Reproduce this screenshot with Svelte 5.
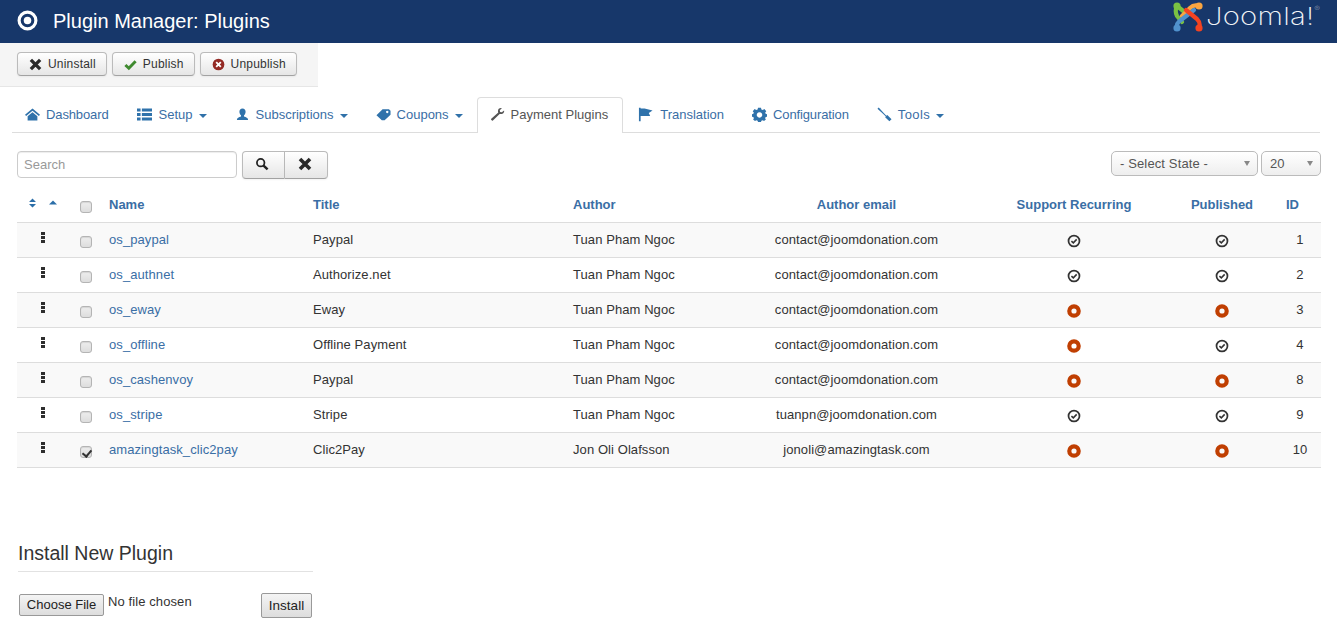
<script>
  const rows = [
    { name: 'os_paypal', title: 'Paypal', author: 'Tuan Pham Ngoc', email: 'contact@joomdonation.com', recurring: true, published: true, id: 1 },
    { name: 'os_authnet', title: 'Authorize.net', author: 'Tuan Pham Ngoc', email: 'contact@joomdonation.com', recurring: true, published: true, id: 2 },
    { name: 'os_eway', title: 'Eway', author: 'Tuan Pham Ngoc', email: 'contact@joomdonation.com', recurring: false, published: false, id: 3 },
    { name: 'os_offline', title: 'Offline Payment', author: 'Tuan Pham Ngoc', email: 'contact@joomdonation.com', recurring: false, published: true, id: 4 },
    { name: 'os_cashenvoy', title: 'Paypal', author: 'Tuan Pham Ngoc', email: 'contact@joomdonation.com', recurring: false, published: false, id: 8 },
    { name: 'os_stripe', title: 'Stripe', author: 'Tuan Pham Ngoc', email: 'tuanpn@joomdonation.com', recurring: true, published: true, id: 9 },
    { name: 'amazingtask_clic2pay', title: 'Clic2Pay', author: 'Jon Oli Olafsson', email: 'jonoli@amazingtask.com', recurring: false, published: false, id: 10, checked: true }
  ];

  const tabs = [
    { label: 'Dashboard', icon: 'home', fit: 'tight' },
    { label: 'Setup', icon: 'list', caret: true },
    { label: 'Subscriptions', icon: 'user', caret: true },
    { label: 'Coupons', icon: 'tag', caret: true },
    { label: 'Payment Plugins', icon: 'wrench', active: true },
    { label: 'Translation', icon: 'flag' },
    { label: 'Configuration', icon: 'cog', fit: 'tight' },
    { label: 'Tools', icon: 'tool', caret: true, fit: 'wide' }
  ];
</script>

{#snippet tabIcon(kind)}
  <svg class="tab-icon {kind}" viewBox="0 0 16 16" aria-hidden="true">
    {#if kind === 'home'}
      <path d="M8 1.500 L16 8.300 L14.800 9.600 L8 4 L1.200 9.600 L0 8.300 Z M2.800 9.800 L8 5.500 L13.200 9.800 V14.500 H2.800 Z" />
    {:else if kind === 'list'}
      <path d="M0 1.500h3.800v3.400H0zM5.200 1.500H16v3.400H5.200zM0 6.300h3.800v3.400H0zM5.200 6.300H16v3.400H5.200zM0 11.100h3.800v3.400H0zM5.200 11.100H16v3.400H5.200z" />
    {:else if kind === 'user'}
      <path d="M8 1.500c2.100 0 3.300 1.500 3.300 3.500 0 1.600-.7 3.100-1.700 3.900v1.100c2.300.7 4.300 1.300 4.400 3.800H2c.1-2.500 2.100-3.100 4.400-3.800V8.900C5.400 8.100 4.700 6.600 4.700 5c0-2 1.200-3.500 3.300-3.500z" />
    {:else if kind === 'tag'}
      <path fill-rule="evenodd" d="M0.500 8.800 L7 2.500 H13.800 L15.500 4 V8.200 L9.200 14 H6.200 Z M12 4 a1.300 1.300 0 1 0 .01 0 Z" />
    {:else if kind === 'wrench'}
      <path d="M15 3.600 L12.600 5.700 L10.800 5.300 L10.400 3.500 L12.600 1.300 C10.500 .7 8.400 2.200 8.500 4.500 C8.500 5 8.600 5.400 8.800 5.800 L1.300 12.600 C.5 13.400 2.200 15.200 3.100 14.300 L10.300 7.400 C12.800 8.100 15.700 6.200 15 3.600 Z" />
    {:else if kind === 'flag'}
      <path d="M1 .8h1.800v14.400H1zM2.800 1.500 H7 L15.500 3.800 L11.500 6.500 L13 9.500 H2.800 Z" />
    {:else if kind === 'cog'}
      <path fill-rule="evenodd" d="M6.400 .8 H9.600 L10 2.700 L11.500 3.300 L13.200 2.200 L15.200 4.400 L14 6 L14.600 7.300 L16 7.700 V10.300 L14.600 10.700 L14 12 L14.800 13.200 L12.800 15 L11.500 14 L10 14.700 L9.600 16 H6.400 L6 14.700 L4.500 14 L3.200 15 L1.200 13.200 L2 12 L1.400 10.700 L0 10.300 V7.700 L1.400 7.300 L2 6 L.8 4.400 L2.800 2.200 L4.500 3.300 L6 2.700 Z M8 5.600 a2.900 2.900 0 1 0 .01 0 Z" />
    {:else if kind === 'tool'}
      <path d="M.5 1.800 L1.800 .5 L7.400 6.600 L10 9.200 L11 8.500 L15.500 13 L13.200 15.300 L8.700 11 L9.400 10 L6.700 7.400 Z" />
    {/if}
  </svg>
{/snippet}

{#snippet stateIcon(on)}
  {#if on}
    <svg class="state" viewBox="0 0 12 12" aria-hidden="true">
      <circle cx="6" cy="6" r="4.700" fill="none" stroke="#333" stroke-width="1.500" />
      <path d="M3.800 6.100 L5.400 7.600 L8.300 4.600" fill="none" stroke="#333" stroke-width="1.300" />
    </svg>
  {:else}
    <svg class="state" viewBox="0 0 14 14" aria-hidden="true">
      <circle cx="7" cy="7" r="4.700" fill="none" stroke="#c03f02" stroke-width="4.200" />
    </svg>
  {/if}
{/snippet}

{#snippet crossIcon(cls)}
  <svg class={cls} viewBox="0 0 14 14" aria-hidden="true">
    <path d="M2 2 L12 12 M12 2 L2 12" stroke="#2a2a2a" stroke-width="3.600" />
  </svg>
{/snippet}

<header class="topbar">
  <div class="title">
    <svg class="title-icon" viewBox="0 0 20 20" aria-hidden="true">
      <circle cx="10" cy="10" r="8" fill="none" stroke="#fff" stroke-width="3" />
      <circle cx="10" cy="10" r="3.600" fill="#fff" />
    </svg>
    <h1>Plugin Manager: Plugins</h1>
  </div>
  <div class="logo">
    <svg viewBox="0 0 30 30" width="30" height="30" aria-hidden="true">
      <g fill="none" stroke-width="4.200" stroke-linecap="round" stroke-linejoin="round">
        <path d="M9 20 L4 14 Q1.500 9 4 4 L14 12" stroke="#7ac143" />
        <path d="M26 4 Q21 2 17 6 L9 14" stroke="#f9a541" />
        <path d="M4 26 Q3 21 8 18 L21 8" stroke="#5091cd" />
        <path d="M26 26 Q28 21 24 17 L13 8" stroke="#f44321" />
      </g>
      <circle cx="4" cy="4" r="3.600" fill="#7ac143" />
      <circle cx="26" cy="4" r="3.600" fill="#f9a541" />
      <circle cx="4" cy="26" r="3.600" fill="#5091cd" />
      <circle cx="26" cy="26" r="3.600" fill="#f44321" />
    </svg>
    <div class="wordmark"><span>Joomla!<sup>®</sup></span></div>
  </div>
</header>

<div class="toolbar">
  <button class="btn">{@render crossIcon('tb-icon')}Uninstall</button>
  <button class="btn">
    <svg class="tb-icon" viewBox="0 0 14 14" aria-hidden="true">
      <path d="M1.500 7.500 L5.200 11 L12.500 3.500" fill="none" stroke="#3f8a2f" stroke-width="3.200" />
    </svg>
    Publish
  </button>
  <button class="btn">
    <svg class="tb-icon" viewBox="0 0 14 14" aria-hidden="true">
      <circle cx="7" cy="7" r="6.300" fill="#942a25" />
      <path d="M4.500 4.500 L9.500 9.500 M9.500 4.500 L4.500 9.500" stroke="#fff" stroke-width="2" />
    </svg>
    Unpublish
  </button>
</div>

<nav class="tabs">
  {#each tabs as tab}
    <a class="tab {tab.fit ?? ''}" class:active={tab.active} href="#{tab.icon}">
      {@render tabIcon(tab.icon)}
      <span>{tab.label}</span>
      {#if tab.caret}<span class="caret"></span>{/if}
    </a>
  {/each}
</nav>

<main class="content">
  <div class="filters">
    <input class="search" type="text" placeholder="Search" />
    <div class="btn-group">
      <button class="btn icon-btn">
        <svg class="btn-glyph search-glyph" viewBox="0 0 16 16" aria-hidden="true">
          <circle cx="6.500" cy="6.500" r="4.300" fill="none" stroke="#222" stroke-width="2" />
          <path d="M9.800 9.800 L14.400 14.200" stroke="#222" stroke-width="2.800" />
        </svg>
      </button>
      <button class="btn icon-btn">{@render crossIcon('btn-glyph')}</button>
    </div>
    <div class="selects">
      <div class="select state-select">- Select State -<span class="arrow"></span></div>
      <div class="select limit-select">20<span class="arrow"></span></div>
    </div>
  </div>

  <table>
    <colgroup>
      <col style="width:52px" />
      <col style="width:40px" />
      <col style="width:204px" />
      <col style="width:260px" />
      <col style="width:175px" />
      <col style="width:217px" />
      <col style="width:218px" />
      <col style="width:78px" />
      <col style="width:60px" />
    </colgroup>
    <thead>
      <tr>
        <th class="sort">
          <svg viewBox="0 0 30 10" width="30" height="10" aria-hidden="true">
            <path d="M1 4 L4.500 .5 L8 4 Z M1 6 L4.500 9.500 L8 6 Z M21 6.500 L25 2.500 L29 6.500 Z" fill="#2b6ea8" />
          </svg>
        </th>
        <th class="check"><input type="checkbox" /></th>
        <th>Name</th>
        <th>Title</th>
        <th>Author</th>
        <th class="center">Author email</th>
        <th class="center">Support Recurring</th>
        <th class="center">Published</th>
        <th class="id-head">ID</th>
      </tr>
    </thead>
    <tbody>
      {#each rows as row}
        <tr>
          <td class="drag"><span class="dots"><i></i><i></i><i></i></span></td>
          <td class="check"><input type="checkbox" checked={row.checked} /></td>
          <td><a href="#{row.name}">{row.name}</a></td>
          <td>{row.title}</td>
          <td>{row.author}</td>
          <td class="center">{row.email}</td>
          <td class="center icon-cell">{@render stateIcon(row.recurring)}</td>
          <td class="center icon-cell">{@render stateIcon(row.published)}</td>
          <td class="id">{row.id}</td>
        </tr>
      {/each}
    </tbody>
  </table>

  <section class="install">
    <h3>Install New Plugin</h3>
    <div class="install-row">
      <button class="native">Choose File</button>
      <span class="no-file">No file chosen</span>
      <button class="native install-btn">Install</button>
    </div>
  </section>
</main>

<style>
  :global(body) {
    font-family: "Liberation Sans", Arial, sans-serif;
    font-size: 13px;
    color: #333;
    background: #fff;
    overflow: hidden;
  }

  .topbar {
    height: 43px;
    background: #17376a;
    display: flex;
    justify-content: space-between;
    color: #fff;
  }
  .title {
    display: flex;
    align-items: center;
    padding-left: 17px;
    gap: 15px;
  }
  .title-icon {
    width: 21px;
    height: 21px;
    margin-bottom: 2px;
  }
  h1 {
    margin: 0;
    font-size: 20px;
    font-weight: 400;
  }
  .logo {
    display: flex;
    align-items: flex-start;
    gap: 3px;
    padding: 2px 21px 0 0;
  }
  .wordmark {
    width: 110px;
    font-family: Inter, Lato, sans-serif;
    font-weight: 200;
    font-size: 24px;
    line-height: 30px;
    letter-spacing: .2px;
    color: #f2f5f8;
  }
  .wordmark span {
    display: inline-block;
    white-space: nowrap;
    transform: scaleX(1.22);
    transform-origin: left center;
  }
  .wordmark sup {
    font-size: 7px;
    vertical-align: top;
    line-height: 14px;
    color: #aab;
    letter-spacing: 0;
  }

  .toolbar {
    width: 318px;
    box-sizing: border-box;
    height: 44px;
    background: #f5f5f5;
    border-bottom: 1px solid #e6e6e6;
    padding: 9px 0 0 17px;
    display: flex;
    gap: 5px;
    align-items: flex-start;
  }
  .btn {
    font: 12px "Liberation Sans", Arial, sans-serif;
    letter-spacing: .2px;
    color: #333;
    height: 24px;
    padding: 0 10px 0 11px;
    display: flex;
    align-items: center;
    gap: 6px;
    background: linear-gradient(#fff, #e6e6e6);
    border: 1px solid #bbb;
    border-bottom-color: #a2a2a2;
    border-radius: 4px;
    box-shadow: inset 0 1px 0 rgba(255, 255, 255, .2), 0 1px 2px rgba(0, 0, 0, .05);
  }
  .tb-icon {
    width: 13px;
    height: 13px;
    flex: none;
  }

  .tabs {
    display: flex;
    gap: 2px;
    margin: 10px 17px 0 12px;
    height: 36px;
    box-sizing: border-box;
    border-bottom: 1px solid #ddd;
  }
  .tab {
    display: flex;
    align-items: center;
    height: 35px;
    box-sizing: border-box;
    padding: 0 12px 1px;
    border: 1px solid transparent;
    border-bottom: 0;
    color: #3a6ea5;
    text-decoration: none;
  }
  .tab.tight {
    letter-spacing: -.12px;
  }
  .tab.wide {
    letter-spacing: .4px;
  }
  .tab.active {
    height: 36px;
    margin-left: -1px;
    padding: 0 14px 3px 12px;
    color: #555;
    background: #fff;
    border-color: #ddd;
    border-radius: 4px 4px 0 0;
  }
  .tab-icon {
    width: 15px;
    height: 15px;
    margin-right: 6px;
    fill: #2f72ab;
  }
  .tab-icon.list, .tab-icon.flag {
    margin-right: 7px;
  }
  .active .tab-icon {
    fill: #555;
  }
  .caret {
    width: 0;
    height: 0;
    margin: 2px 0 0 6px;
    border-top: 4px solid #3071a9;
    border-left: 4px solid transparent;
    border-right: 4px solid transparent;
  }

  .content {
    padding: 18px 16px 0 17px;
  }
  .filters {
    display: flex;
    align-items: flex-start;
    height: 36px;
  }
  .search {
    box-sizing: border-box;
    width: 220px;
    height: 27px;
    padding: 0 6px;
    border: 1px solid #ccc;
    border-radius: 4px;
    font: 13px "Liberation Sans", Arial, sans-serif;
    box-shadow: inset 0 1px 1px rgba(0, 0, 0, .075);
  }
  .search::placeholder {
    color: #999;
  }
  .btn-group {
    display: flex;
    margin-left: 5px;
  }
  .icon-btn {
    width: 43px;
    height: 28px;
    justify-content: center;
    padding: 0;
  }
  .icon-btn:first-child {
    border-radius: 4px 0 0 4px;
  }
  .icon-btn:last-child {
    border-radius: 0 4px 4px 0;
    border-left: 0;
  }
  .btn-glyph {
    width: 14px;
    height: 14px;
    margin: 0 2px 3px 0;
  }
  .search-glyph {
    margin-right: 4px;
  }
  .selects {
    display: flex;
    margin-left: auto;
    gap: 3px;
  }
  .select {
    box-sizing: border-box;
    height: 25px;
    line-height: 23px;
    padding-left: 8px;
    position: relative;
    color: #555;
    letter-spacing: .13px;
    border: 1px solid #bbb;
    border-radius: 5px;
    background: linear-gradient(#fff, #eee);
  }
  .state-select {
    width: 147px;
  }
  .limit-select {
    width: 60px;
  }
  .arrow {
    position: absolute;
    right: 7px;
    top: 9px;
    border-top: 5px solid #888;
    border-left: 3.500px solid transparent;
    border-right: 3.500px solid transparent;
  }

  table {
    width: 1304px;
    table-layout: fixed;
    border-collapse: collapse;
  }
  th, td {
    padding: 0;
    text-align: left;
    border-bottom: 1px solid #ddd;
    white-space: nowrap;
    box-sizing: border-box;
    height: 35px;
  }
  td {
    padding-bottom: 1px;
    letter-spacing: .08px;
  }
  th {
    color: #3a6ea5;
    font-weight: 700;
  }
  tbody tr:nth-child(odd) {
    background: #f9f9f9;
  }
  td a {
    color: #3a6ea5;
    text-decoration: none;
  }
  .center {
    text-align: center;
  }
  .sort {
    padding: 0 0 3px 11px;
  }
  .sort svg {
    display: block;
  }
  .check {
    padding-left: 11px;
  }
  input[type='checkbox'] {
    appearance: none;
    display: block;
    width: 12px;
    height: 12px;
    margin: 5px 0 0;
    border: 1px solid #b4b4b4;
    border-radius: 3px;
    background: linear-gradient(#eee, #ddd);
    box-shadow: inset 0 1px 1px rgba(0, 0, 0, .1);
    position: relative;
  }
  input[type='checkbox']:checked::after {
    content: '';
    position: absolute;
    left: 3px;
    top: 1px;
    width: 4px;
    height: 7px;
    border: solid #333;
    border-width: 0 2px 2px 0;
    transform: rotate(40deg);
  }
  .drag {
    padding-left: 24px;
  }
  .dots {
    display: flex;
    flex-direction: column;
    gap: 1px;
    margin-bottom: 4px;
  }
  .dots i {
    display: block;
    width: 4px;
    height: 3px;
    background: #2e2e2e;
  }
  .state {
    display: inline-block;
    vertical-align: middle;
    margin-top: 4px;
    width: 14px;
    height: 14px;
  }
  .id {
    text-align: center;
    padding-left: 18px;
  }
  .id-head {
    padding-left: 25px;
  }

  .install {
    width: 295px;
    margin-top: 75px;
    margin-left: 1px;
  }
  h3 {
    margin: 0;
    padding-bottom: 8px;
    border-bottom: 1px solid #e2e2e2;
    font-size: 19.500px;
    font-weight: 400;
    line-height: 20px;
    color: #333;
  }
  .install-row {
    display: flex;
    align-items: flex-start;
    padding: 22px 0 0 1px;
  }
  .native {
    font: 13px "Liberation Sans", Arial, sans-serif;
    color: #222;
    height: 22px;
    width: 85px;
    padding: 0;
    background: linear-gradient(#f4f4f4, #ddd);
    border: 1px solid #999;
    border-radius: 2px;
  }
  .no-file {
    margin-left: 4px;
    font-size: 13px;
    letter-spacing: .1px;
    line-height: 15px;
  }
  .install-btn {
    height: 25px;
    width: 51px;
    margin-left: auto;
    margin-right: 1px;
    margin-top: -1px;
    font-size: 13.500px;
  }
</style>
